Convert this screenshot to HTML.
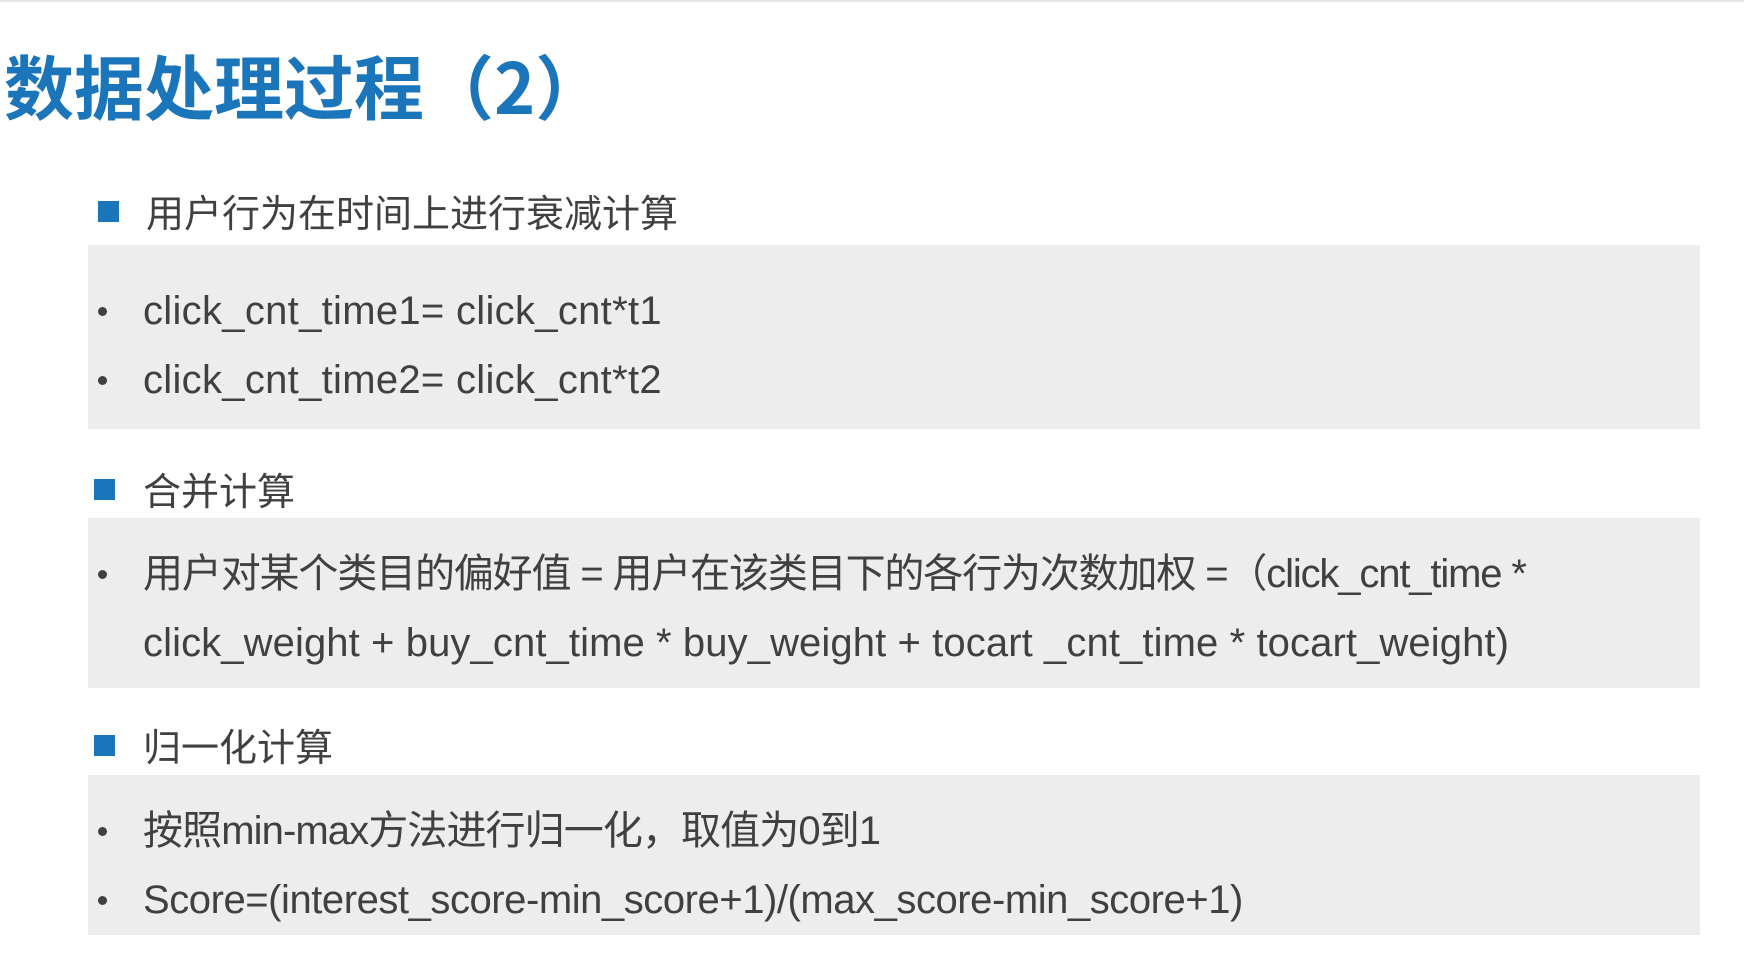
<!DOCTYPE html>
<html><head><meta charset="utf-8"><style>
body{margin:0;width:1744px;height:961px;background:#fff;position:relative;overflow:hidden;font-family:"Liberation Sans","Noto Sans CJK SC",sans-serif;color:#404040}
.topline{position:absolute;left:0;top:0;width:1744px;height:2px;background:#e6e6e6}
.title{position:absolute;left:4px;top:40px;font-size:70px;font-weight:bold;color:#1b75bb;font-family:"Noto Sans CJK SC","Liberation Sans",sans-serif;white-space:nowrap;line-height:90px}
.box{position:absolute;left:88px;width:1612px;background:#ededed}
.h{position:absolute;left:146px;font-size:38px;font-family:"Noto Sans CJK SC",sans-serif;line-height:44px;white-space:nowrap;color:#404040}
.sq{position:absolute;width:21px;height:21px;background:#1b75bb}
.l{position:absolute;left:143px;font-size:40px;line-height:44px;white-space:nowrap;letter-spacing:0.4px;font-family:"Liberation Sans","Noto Sans CJK SC",sans-serif}
.d{position:absolute;left:98px;width:9px;height:9px;border-radius:50%;background:#404040}
</style></head><body>
<div class="topline"></div>
<div class="title">数据处理过程（2）</div>

<div class="sq" style="left:98px;top:201px"></div>
<div class="h" style="top:189px">用户行为在时间上进行衰减计算</div>
<div class="box" style="top:245px;height:184px"></div>
<div class="d" style="top:307px"></div><div class="l" style="top:289px;letter-spacing:0.3px">click_cnt_time1= click_cnt*t1</div>
<div class="d" style="top:376px"></div><div class="l" style="top:358px;letter-spacing:0.3px">click_cnt_time2= click_cnt*t2</div>

<div class="sq" style="left:94px;top:479px"></div>
<div class="h" style="top:467px;left:143px">合并计算</div>
<div class="box" style="top:518px;height:170px"></div>
<div class="d" style="top:570px"></div><div class="l" style="top:552px;letter-spacing:-1.15px">用户对某个类目的偏好值 = 用户在该类目下的各行为次数加权 =（click_cnt_time *</div>
<div class="l" style="top:621px;letter-spacing:0.1px">click_weight + buy_cnt_time * buy_weight + tocart _cnt_time * tocart_weight)</div>

<div class="sq" style="left:94px;top:735px"></div>
<div class="h" style="top:723px;left:143px">归一化计算</div>
<div class="box" style="top:775px;height:160px"></div>
<div class="d" style="top:827px"></div><div class="l" style="top:809px;letter-spacing:-0.9px">按照min-max方法进行归一化，取值为0到1</div>
<div class="d" style="top:896px"></div><div class="l" style="top:878px;letter-spacing:-0.45px">Score=(interest_score-min_score+1)/(max_score-min_score+1)</div>
</body></html>
